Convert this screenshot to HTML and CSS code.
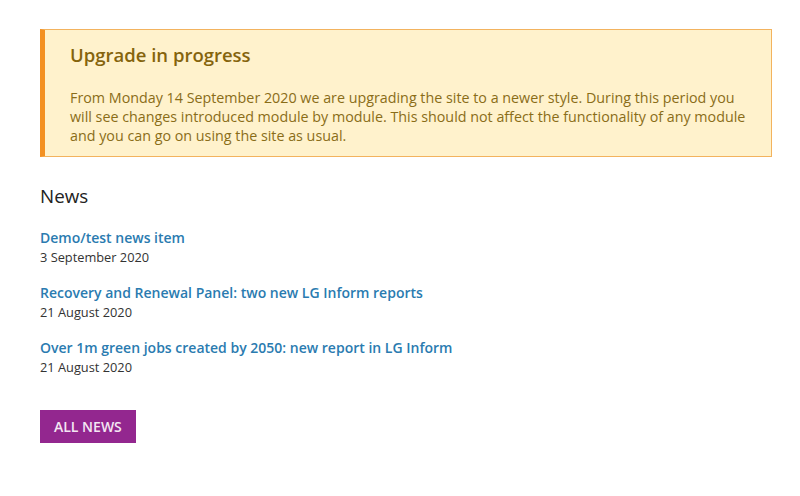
FILE: index.html
```html
<!DOCTYPE html>
<html>
<head>
<title>News</title>
<link rel="stylesheet" href="styles.css">
</head>
<body>

<div class="page">
  <div class="notice">
    <h2>Upgrade in progress</h2>
    <p>From Monday 14 September 2020 we are upgrading the site to a newer style. During this period you will see changes introduced module by module. This should not affect the functionality of any module and you can go on using the site as usual.</p>
  </div>

  <h3 class="news-title">News</h3>

  <ul class="news">
    <li>
      <a href="#">Demo/test news item</a>
      <span class="date">3 September 2020</span>
    </li>
    <li>
      <a href="#">Recovery and Renewal Panel: two new LG Inform reports</a>
      <span class="date">21 August 2020</span>
    </li>
    <li>
      <a href="#">Over 1m green jobs created by 2050: new report in LG Inform</a>
      <span class="date">21 August 2020</span>
    </li>
  </ul>

  <a class="button" href="#">ALL NEWS</a>
</div>

</body>
</html>
```

FILE: styles.css
```css
body {
  margin: 0;
  font-family: "Open Sans", "Noto Sans", sans-serif;
  color: #333;
  background: #fff;
}

a {
  text-decoration: none;
}

.page {
  width: 732px;
  margin: 0 0 0 40px;
  padding-top: 29px;
}

.notice {
  background-color: #fff2cc;
  border: 1px solid #f3b35e;
  border-left: 5px solid #f39122;
  padding: 13px 18px 11px 25px;
  color: #8a6d18;
}

.notice h2 {
  margin: 0 0 21px 0;
  font-size: 18.5px;
  font-weight: 600;
  line-height: 24px;
  color: #85640c;
}

.notice p {
  margin: 0;
  font-size: 14.3px;
  line-height: 19px;
}

.news-title {
  margin: 27px 0 20px 0;
  font-size: 18.8px;
  font-weight: 400;
  line-height: 24px;
  color: #222;
}

.news {
  list-style: none;
  margin: 0;
  padding: 0;
}

.news li {
  margin-bottom: 17px;
}

.news a {
  display: block;
  font-size: 14px;
  font-weight: 600;
  line-height: 20px;
  color: #2a7bb0;
}

.news .date {
  display: block;
  font-size: 12.8px;
  line-height: 18px;
  color: #333;
}

.button {
  display: inline-block;
  margin-top: 17px;
  padding: 7px 14px;
  background-color: #93278f;
  color: #f4e6f3;
  font-size: 14px;
  font-weight: 600;
  line-height: 19px;
}
```
